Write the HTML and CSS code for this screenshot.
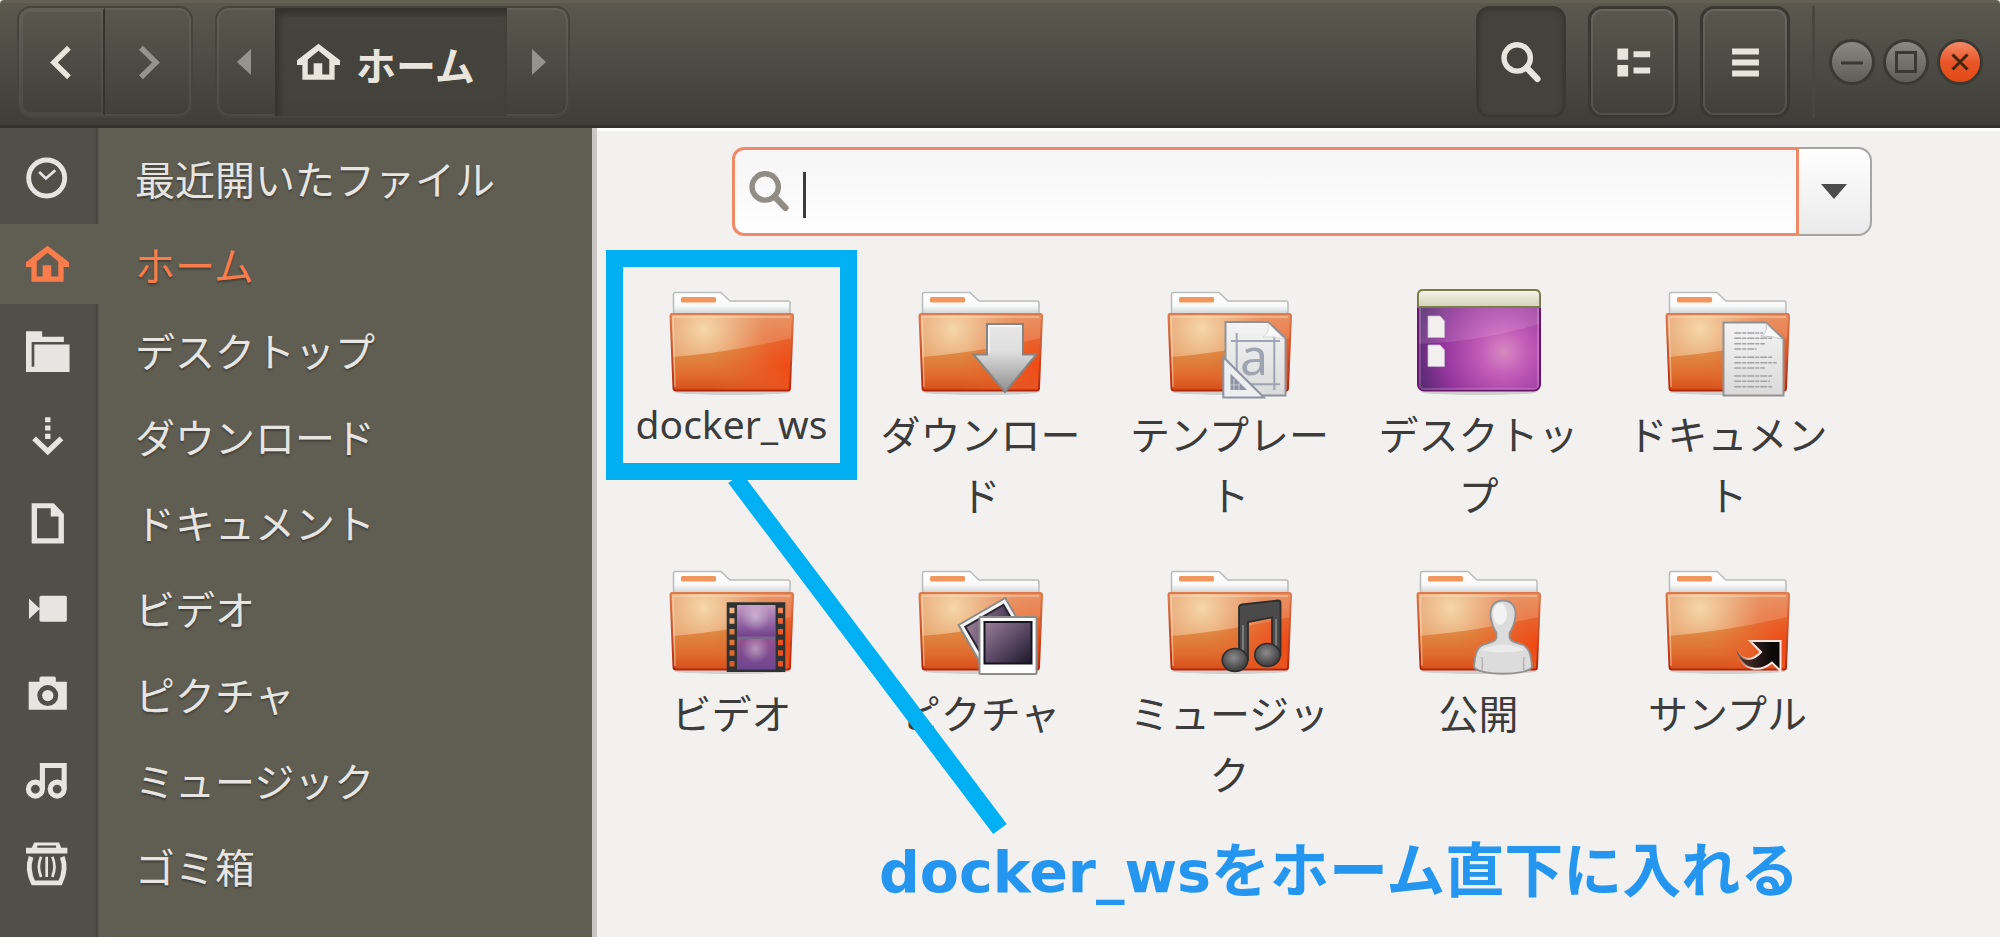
FILE: index.html
```html
<!DOCTYPE html>
<html lang="ja">
<head>
<meta charset="utf-8">
<meta name="viewport" content="width=device-width, initial-scale=1">
<title>ホーム</title>
<link rel="stylesheet" href="styles.css">
</head>
<body>
<svg class="defs" width="0" height="0" aria-hidden="true">
  <defs>
    <linearGradient id="front" x1="0" y1="0" x2="0" y2="1">
      <stop offset="0" stop-color="#e2925c"/><stop offset=".5" stop-color="#df8a45"/><stop offset=".8" stop-color="#df6c2d"/><stop offset="1" stop-color="#d64e1a"/>
    </linearGradient>
    <radialGradient id="ember" gradientUnits="userSpaceOnUse" cx="126" cy="80" r="76">
      <stop offset="0" stop-color="#f04a14"/><stop offset=".3" stop-color="#ec5420" stop-opacity=".8"/><stop offset="1" stop-color="#e8642a" stop-opacity="0"/>
    </radialGradient>
    <radialGradient id="shine" gradientUnits="userSpaceOnUse" cx="42" cy="43" r="60">
      <stop offset="0" stop-color="#f4d49c" stop-opacity=".95"/><stop offset="1" stop-color="#f0a878" stop-opacity="0"/>
    </radialGradient>
    <linearGradient id="edge" x1="0" y1="0" x2="0" y2="1">
      <stop offset="0" stop-color="#df7a4c"/><stop offset="1" stop-color="#b3260a"/>
    </linearGradient>
    <linearGradient id="paper" x1="0" y1="0" x2="0" y2="1">
      <stop offset="0" stop-color="#ffffff"/><stop offset=".6" stop-color="#fafafa"/><stop offset="1" stop-color="#cfd3d4"/>
    </linearGradient>
    <linearGradient id="sheet" x1="0" y1="0" x2="0" y2="1">
      <stop offset="0" stop-color="#f4f4f4"/><stop offset="1" stop-color="#dadada"/>
    </linearGradient>
    <linearGradient id="silver" x1="0" y1="0" x2="0" y2="1">
      <stop offset="0" stop-color="#e8e8e8"/><stop offset=".4" stop-color="#dedede"/><stop offset="1" stop-color="#8e8e8e"/>
    </linearGradient>
    <radialGradient id="violet" gradientUnits="userSpaceOnUse" cx="95" cy="66" r="88">
      <stop offset="0" stop-color="#d78ac0"/><stop offset=".28" stop-color="#c25ab8"/><stop offset=".7" stop-color="#93359c"/><stop offset="1" stop-color="#5b2a74"/>
    </radialGradient>
    <linearGradient id="panel" x1="0" y1="0" x2="0" y2="1">
      <stop offset="0" stop-color="#f6f5ea"/><stop offset="1" stop-color="#d3d2b8"/>
    </linearGradient>
    <linearGradient id="photo" x1="0" y1="0" x2="1" y2="1">
      <stop offset="0" stop-color="#9a8098"/><stop offset=".5" stop-color="#5c4a66"/><stop offset="1" stop-color="#1d1828"/>
    </linearGradient>
    <linearGradient id="film" x1="0" y1="0" x2="0" y2="1">
      <stop offset="0" stop-color="#c39ac4"/><stop offset=".48" stop-color="#73418c"/><stop offset=".52" stop-color="#93528f"/><stop offset="1" stop-color="#6c4590"/>
    </linearGradient>
    <radialGradient id="glow">
      <stop offset="0" stop-color="#fff" stop-opacity=".4"/><stop offset="1" stop-color="#fff" stop-opacity="0"/>
    </radialGradient>
    <radialGradient id="note" cx=".45" cy=".4" r=".6">
      <stop offset="0" stop-color="#8c8c8c"/><stop offset="1" stop-color="#3a3a3a"/>
    </radialGradient>
    <linearGradient id="emblem" x1="0" y1="0" x2="1" y2="0">
      <stop offset="0" stop-color="#5a3a34"/><stop offset=".8" stop-color="#0c0808"/>
    </linearGradient>
    <linearGradient id="rim" x1="0" y1="0" x2="1" y2="0">
      <stop offset="0" stop-color="#f6e7e0" stop-opacity="0"/><stop offset=".4" stop-color="#f6e7e0"/>
    </linearGradient>
    <symbol id="folder" viewBox="0 0 140 115">
      <ellipse cx="70" cy="106" rx="58" ry="3" fill="#000" opacity=".14"/>
      <path d="M11.500 28V8.500Q11.500 6.500 13.500 6.500H59L68 15H126Q128 15 128 17V28Z" fill="url(#paper)" stroke="#b9bcbc" stroke-width="1.500"/>
      <rect x="19" y="11" width="35" height="5.500" rx="1.500" fill="#f0965f"/>
      <path d="M10 28H129Q131 28 131 30L128 102Q128 104.500 126 104.500H14Q11.500 104.500 11.500 102L8.500 30Q8.500 28 10 28Z" fill="url(#front)"/>
      <path d="M10 28H129Q131 28 131 30L128 102Q128 104.500 126 104.500H14Q11.500 104.500 11.500 102L8.500 30Q8.500 28 10 28Z" fill="url(#ember)"/>
      <path d="M10 28H130L129.500 52Q70 66 10.500 71Z" fill="url(#shine)"/>
      <path d="M10 28H130L129.500 52Q70 66 10.500 71Z" fill="#fff" opacity=".16"/>
      <path d="M10 28H129Q131 28 131 30L128 102Q128 104.500 126 104.500H14Q11.500 104.500 11.500 102L8.500 30Q8.500 28 10 28Z" fill="none" stroke="url(#edge)" stroke-width="2"/>
      <path d="M13 101L11 31H128" fill="none" stroke="#ffe6c4" stroke-width="1.500" opacity=".5"/>
    </symbol>
    <symbol id="house" viewBox="0 0 16 16">
      <path fill-rule="evenodd" d="M8 1L16.100 7.200V8.900H14V14.400H2V8.900H-.100V7.200ZM8 3.600L4 6.900V12.500H6.200V8.300H9.400V12.500H12V6.900Z"/>
    </symbol>
    <symbol id="lens" viewBox="0 0 16 16">
      <circle cx="6.400" cy="6.300" r="4.900" fill="none" stroke="currentColor" stroke-width="2"/>
      <path d="M9.900 9.900L13.900 14.100" stroke="currentColor" stroke-width="2.400" stroke-linecap="round"/>
    </symbol>
  </defs>
</svg>

<div class="window">
  <header class="titlebar">
    <div class="group nav">
      <button class="seg" type="button" aria-label="戻る"><svg class="icon" viewBox="0 0 16 16"><path class="line" d="M10.400 2.500L4.800 8L10.400 13.500"/></svg></button>
      <button class="seg seg-dim" type="button" aria-label="進む"><svg class="icon" viewBox="0 0 16 16"><path class="line" d="M5.200 2.500L10.800 8L5.200 13.500"/></svg></button>
    </div>
    <div class="group path">
      <button class="step" type="button" aria-label="前の場所"><svg class="tri" viewBox="0 0 14 26"><path d="M12 0V26L-2 13Z"/></svg></button>
      <button class="place" type="button"><svg class="icon"><use href="#house"/></svg><span>ホーム</span></button>
      <button class="step step-next" type="button" aria-label="次の場所"><svg class="tri" viewBox="0 0 14 26"><path d="M2 0V26L16 13Z"/></svg></button>
    </div>
    <div class="tools">
      <button class="tool tool-on" type="button" aria-label="検索"><svg class="icon"><use href="#lens"/></svg></button>
      <button class="tool" type="button" aria-label="表示"><svg class="icon" viewBox="0 0 16 16"><path d="M2 2.800H6V7H2ZM2 8.900H6V13.200H2ZM8 3.800H14.200V6H8ZM8 9.900H14.200V12.100H8Z"/></svg></button>
      <button class="tool" type="button" aria-label="メニュー"><svg class="icon" viewBox="0 0 16 16"><path d="M3 2.800H13V5H3ZM3 6.900H13V9.100H3ZM3 11H13V13.200H3Z"/></svg></button>
    </div>
    <div class="controls">
      <button class="ctl" type="button" aria-label="最小化"><svg viewBox="0 0 40 40"><path d="M9 21H31"/></svg></button>
      <button class="ctl" type="button" aria-label="最大化"><svg viewBox="0 0 40 40"><path d="M10.500 10.500H29.500V29.500H10.500Z"/></svg></button>
      <button class="ctl ctl-close" type="button" aria-label="閉じる"><svg viewBox="0 0 40 40"><path d="M12.500 12.500L27.500 27.500M27.500 12.500L12.500 27.500"/></svg></button>
    </div>
  </header>

  <div class="body">
    <nav class="sidebar" aria-label="場所">
      <a class="row" href="#recent"><span class="cell"><svg class="icon" viewBox="0 0 16 16"><circle cx="7.700" cy="7.800" r="6.700" fill="none" stroke="currentColor" stroke-width="1.800"/><path d="M4.900 5.600L7.400 8L10.900 4.900" fill="none" stroke="currentColor" stroke-width="1"/></svg></span><span class="name">最近開いたファイル</span></a>
      <a class="row row-on" href="#home" aria-current="page"><span class="cell"><svg class="icon"><use href="#house"/></svg></span><span class="name">ホーム</span></a>
      <a class="row" href="#desktop"><span class="cell"><svg class="icon" viewBox="0 0 16 16"><path d="M0 .8H6V2.900H14.100V4.800H2.100V14H3.100V5.800H16.200V16H0Z"/></svg></span><span class="name">デスクトップ</span></a>
      <a class="row" href="#downloads"><span class="cell"><svg class="icon" viewBox="0 0 16 16"><path d="M7.100 .8H9.100V2.700H7.100ZM7.100 3.900H9.100V5.800H7.100ZM7.100 7H9.100V8.900H7.100Z"/><path class="line" d="M3 8.700L8.100 13.600L13.200 8.700"/></svg></span><span class="name">ダウンロード</span></a>
      <a class="row" href="#documents"><span class="cell"><svg class="icon" viewBox="0 0 16 16"><path fill-rule="evenodd" d="M2.100 .8H10.300L14.100 4.800V15.800H2.100ZM4.100 2.700V13.900H12.100V5.800H9.200V2.700Z"/></svg></span><span class="name">ドキュメント</span></a>
      <a class="row" href="#videos"><span class="cell"><svg class="icon" viewBox="0 0 16 16"><path d="M1.100 4.300L5 7.900V3.900Q5 3.300 5.600 3.300H14.600Q15.200 3.300 15.200 3.900V12.300Q15.200 12.900 14.600 12.900H5.600Q5 12.900 5 12.300V8.300L1.100 11.900Z"/></svg></span><span class="name">ビデオ</span></a>
      <a class="row" href="#pictures"><span class="cell"><svg class="icon" viewBox="0 0 16 16"><path fill-rule="evenodd" d="M5 3.300V2Q5 1.300 5.700 1.300H10.400Q11.100 1.300 11.100 2V3.300H15.200V13.700H1V3.300ZM8.100 4.500A3.900 3.900 0 1 0 8.100 12.300A3.900 3.900 0 1 0 8.100 4.500Z"/><circle cx="8.100" cy="8.400" r="2.100"/></svg></span><span class="name">ピクチャ</span></a>
      <a class="row" href="#music"><span class="cell"><svg class="icon" viewBox="0 0 16 16"><g fill="none" stroke="currentColor" stroke-width="1.900"><circle cx="3.500" cy="11.200" r="2.600"/><circle cx="11.600" cy="11.200" r="2.600"/><path d="M6.100 11.200V2.400H14.200V11.200"/></g></svg></span><span class="name">ミュージック</span></a>
      <a class="row" href="#trash"><span class="cell"><svg class="icon" viewBox="0 0 16 16"><path d="M0 1H2.200L3 -.900H12.300L13.100 1H15.400V3.200H0ZM4.200 .200V1H11.200V.200Z" fill-rule="evenodd"/><path d="M1.900 4.400Q.200 9 2.700 14.100H12.700Q15.200 9 13.500 4.400" fill="none" stroke="currentColor" stroke-width="1.800"/><path d="M5.600 4.400Q4 8 5.600 11.900M7.700 4.400V11.900M9.800 4.400Q11.400 8 9.800 11.900" fill="none" stroke="currentColor" stroke-width="1"/></svg></span><span class="name">ゴミ箱</span></a>
    </nav>

    <main class="content">
      <form class="search" role="search">
        <label class="field">
          <svg class="icon"><use href="#lens"/></svg>
          <span class="caret"></span>
          <input class="input" type="text" aria-label="検索">
        </label>
        <button class="drop" type="button" aria-label="検索オプション"><svg viewBox="0 0 26 15"><path d="M0 0H26L13 15Z"/></svg></button>
      </form>

      <ul class="files">
        <li class="file">
          <svg class="thumb" viewBox="0 0 140 115"><use href="#folder"/></svg>
          <span class="label label-latin">docker_ws</span>
          <span class="frame"></span>
        </li>
        <li class="file">
          <svg class="thumb" viewBox="0 0 140 115"><use href="#folder"/><path d="M76 38H112V68.500H125.500L94 106L62.500 68.500H76Z" fill="url(#silver)" stroke="#858585" stroke-width="2"/><path d="M78 67V40H110" fill="none" stroke="#fff" stroke-width="1.500" opacity=".8"/></svg>
          <span class="label">ダウンロード</span>
        </li>
        <li class="file">
          <svg class="thumb" viewBox="0 0 140 115"><use href="#folder"/><path d="M65.500 36H108L125.500 52V109.500H65.500Z" fill="url(#sheet)" stroke="#8f9299" stroke-width="2"/><path d="M71 55H120M71 98.300H120M76.700 47V104M114.300 51V104" stroke="#9fa4b2" stroke-width="2"/><path d="M108 37Q110 47 103 51Q115 50 124 53Z" fill="#f8f8f8" stroke="#ccc" stroke-width=".7"/><text class="glyph" x="94" y="89" text-anchor="middle">a</text><path d="M63.300 71L104 111.500H63.300Z" fill="#eceef2" stroke="#8d93a2" stroke-width="2"/><path d="M70.500 87.500L87 104H70.500Z" fill="#8d93a2"/><path d="M74 93V104M79 97V104M70.500 99H80" stroke="#c9ccd4" stroke-width="1"/></svg>
          <span class="label">テンプレート</span>
        </li>
        <li class="file">
          <svg class="thumb" viewBox="0 0 140 115"><ellipse cx="70" cy="106" rx="58" ry="3" fill="#000" opacity=".14"/><rect x="9" y="4.500" width="122" height="100" rx="6" fill="url(#violet)"/><path d="M10 22H130V38Q70 56 10 58Z" fill="#fff" opacity=".12"/><rect x="9" y="4.500" width="122" height="100" rx="6" fill="none" stroke="#6c1470" stroke-width="2"/><rect x="11" y="7" width="118" height="96" rx="4" fill="none" stroke="#fff" stroke-width="1.500" opacity=".25"/><path d="M9 21V9Q9 4 14 4H126Q131 4 131 9V21Z" fill="url(#panel)" stroke="#7b7b4a" stroke-width="1.800"/><path d="M19 30H31L35.500 35V51.500H19ZM19 59H31L35.500 64V80.500H19Z" fill="#f1f0ee" stroke="#c9b3cf" stroke-width=".8"/></svg>
          <span class="label">デスクトップ</span>
        </li>
        <li class="file">
          <svg class="thumb" viewBox="0 0 140 115"><use href="#folder"/><path d="M65.500 36.500H108L125.500 52.500V109.500H65.500Z" fill="url(#sheet)" stroke="#8f9290" stroke-width="2"/><path d="M76.300 47H105M76.300 52.300H114M76.300 57.700H107M76.300 63H98.700M76.300 71.300H114M76.300 76.700H118.700M76.300 82H107M76.300 90H114M76.300 95.300H112M76.300 100.700H114" stroke="#a2a2a2" stroke-width="1.600" stroke-dasharray="7 1 4 1"/><path d="M108 37.500Q110 47 103 50Q115 50 124 53Z" fill="#fafafa" stroke="#bbb" stroke-width=".8"/></svg>
          <span class="label">ドキュメント</span>
        </li>
        <li class="file">
          <svg class="thumb" viewBox="0 0 140 115"><use href="#folder"/><rect x="75" y="40" width="38.500" height="65" fill="url(#film)"/><circle cx="93.500" cy="52" r="15" fill="url(#glow)"/><circle cx="93.500" cy="84" r="14" fill="url(#glow)"/><path d="M75 72.700H113" stroke="#76678a" stroke-width="2.500"/><path fill="#2f3232" fill-rule="evenodd" d="M64.700 37.300H123.300V107H64.700ZM75 40V104.500H113.500V40ZM67.500 42.700V48.200H72.500V42.700ZM67.500 53.300V58.800H72.500V53.300ZM67.500 64V69.500H72.500V64ZM67.500 74.700V80.200H72.500V74.700ZM67.500 85.300V90.800H72.500V85.300ZM67.500 96V101.500H72.500V96ZM116 42.700V48.200H121V42.700ZM116 53.300V58.800H121V53.300ZM116 64V69.500H121V64ZM116 74.700V80.200H121V74.700ZM116 85.300V90.800H121V85.300ZM116 96V101.500H121V96Z"/></svg>
          <span class="label">ビデオ</span>
        </li>
        <li class="file">
          <svg class="thumb" viewBox="0 0 140 115"><use href="#folder"/><g transform="translate(47.500 60) rotate(-30)"><rect width="54" height="54" fill="#f4f4f4" stroke="#8b8b88" stroke-width="2"/><rect x="5" y="5" width="44" height="40" fill="url(#photo)" stroke="#2b2433" stroke-width="2"/></g><rect x="68.500" y="52" width="57" height="57" rx="1" fill="#fff" stroke="#8b8b88" stroke-width="2"/><rect x="73.500" y="57" width="47" height="41.500" fill="url(#photo)" stroke="#17131f" stroke-width="2"/></svg>
          <span class="label">ピクチャ</span>
        </li>
        <li class="file">
          <svg class="thumb" viewBox="0 0 140 115"><use href="#folder"/><path d="M79 93V43Q79 40 82 39.500L118 35.500Q120.500 35.500 120.500 38V90H112V52.300L88 57V95H79Z" fill="#4a4a4a" stroke="#2c2c2c" stroke-width="1.800"/><path d="M83 60V92M116 54V84" stroke="#8a8a8a" stroke-width="1.500"/><ellipse cx="75" cy="95" rx="12.800" ry="11.500" fill="url(#note)" stroke="#2c2c2c" stroke-width="1.500"/><ellipse cx="107.500" cy="90" rx="12.800" ry="11.500" fill="url(#note)" stroke="#2c2c2c" stroke-width="1.500"/></svg>
          <span class="label">ミュージック</span>
        </li>
        <li class="file">
          <svg class="thumb" viewBox="0 0 140 115"><use href="#folder"/><path d="M94 35.500C102 35.500 107 41 106.500 50C106 58 103 64 100.500 68V72.500C101 77 107 77.500 113 79.500C121 82.500 122 91 123 102C118 111 70 111 65 102C66 91 67 82.500 75 79.500C81 77.500 87 77 87.500 72.500V68C85 64 82 58 81.500 50C81 41 86 35.500 94 35.500Z" fill="#dcdcdc" stroke="#929292" stroke-width="1.800"/><ellipse cx="91" cy="49" rx="7" ry="11" fill="#f2f2f2"/><path d="M73 106Q74 98 73 92M115 106Q114 98 115 92" fill="none" stroke="#b4b4b4" stroke-width="1.500"/><path d="M72 85Q94 74 116 85Q94 90 72 85Z" fill="#ebebeb"/></svg>
          <span class="label">公開</span>
        </li>
        <li class="file">
          <svg class="thumb" viewBox="0 0 140 115"><use href="#folder"/><path d="M92 76H122.500V106L114 97.500C103 107 84 108 78 84C83 95 93 98 103 87Z" fill="url(#emblem)" stroke="url(#rim)" stroke-width="2"/></svg>
          <span class="label">サンプル</span>
        </li>
      </ul>

      <svg class="pointer" viewBox="0 0 300 360" aria-hidden="true"><path d="M11 -2L276 349"/></svg>
      <p class="caption"><span class="caption-latin">docker_ws</span>をホーム直下に入れる</p>
    </main>
  </div>
</div>
</body>
</html>
```
FILE: styles.css
```css
* {
  box-sizing: border-box;
}

body {
  margin: 0;
  min-height: 100vh;
  padding-bottom: 11px;
  display: flex;
  background: #fff;
  font-family: "Noto Sans CJK JP", sans-serif;
  font-size: 40px;
  line-height: 60px;
}

button {
  margin: 0;
  padding: 0;
  border: 0;
  background: none;
  color: inherit;
  font: inherit;
  display: flex;
  align-items: center;
  justify-content: center;
}

.defs {
  position: absolute;
}

.icon {
  width: 43px;
  height: 43px;
  flex: none;
  fill: currentColor;
  overflow: visible;
}

.line {
  fill: none;
  stroke: currentColor;
  stroke-width: 2;
}

.window {
  flex: 1;
  min-width: 0;
  display: flex;
  flex-direction: column;
}

/* Title bar */
.titlebar {
  display: flex;
  padding: 3px 17px 7px;
  border-top: 3px solid #646154;
  border-bottom: 3px solid #33322e;
  border-radius: 4px 4px 0 0;
  background: linear-gradient(#5b584e, #3e3d38);
  color: #e9e4dc;
}

.group {
  height: 112px;
  display: flex;
  border: 2px solid #45443d;
  border-radius: 14px;
  box-shadow: inset 0 0 0 2px rgba(255, 255, 255, 0.06);
  overflow: hidden;
}

.path {
  margin-left: 22px;
}

.seg {
  width: 86px;
  border: 2px solid transparent;
}

.seg:first-child {
  border-right-color: #34332e;
  border-radius: 12px 0 0 12px;
  box-shadow: inset 0 0 0 2px rgba(255, 255, 255, 0.05);
}

.seg-dim,
.step {
  color: #96938c;
}

.step {
  width: 58px;
}

.step-next {
  width: 61px;
}

.tri {
  width: 14px;
  height: 26px;
  fill: currentColor;
  overflow: visible;
}

.place {
  gap: 16px;
  padding: 0 32px 0 22px;
  background: linear-gradient(#45443d, #42413b);
  box-shadow: inset 4px 6px 6px #33322d;
  font-weight: 700;
}

.place span {
  padding-top: 4px;
}

.tools {
  display: flex;
  gap: 22px;
  margin-left: auto;
}

.tool {
  width: 90px;
  height: 112px;
  border: 3px solid #393833;
  border-radius: 14px;
  box-shadow: inset 0 0 0 2px rgba(255, 255, 255, 0.09);
}

.tool-on {
  background: #43423c;
  box-shadow: inset 0 2px 4px #3a3934;
}

.controls {
  display: flex;
  align-items: center;
  gap: 8px;
  margin-left: 22px;
  padding-left: 14px;
  border-left: 3px solid #47463f;
}

.ctl {
  width: 46px;
  height: 46px;
  border: 3px solid #3a3934;
  border-radius: 50%;
  background: linear-gradient(#8b8981, #5e5d56);
}

.ctl svg {
  width: 40px;
  height: 40px;
  flex: none;
  fill: none;
  stroke: #3a3934;
  stroke-width: 3;
}

.ctl-close {
  background: linear-gradient(#f58a66, #e8562a 50%, #e24a14);
}

.ctl-close svg {
  stroke: #40260f;
}

/* Places */
.body {
  flex: 1;
  display: flex;
}

.sidebar {
  width: 597px;
  flex: none;
  display: flex;
  flex-direction: column;
  gap: 6px;
  padding: 10px 0 20px;
  border-right: 5px solid #c9c6c5;
  background: linear-gradient(90deg, #504f48 95px, #45443e 97px, #605d52 99px);
}

.row {
  height: 80px;
  display: flex;
  align-items: center;
  color: #e6e5e2;
  text-decoration: none;
}

.row-on {
  background: #605d52;
  color: #fa7c4a;
}

.cell {
  width: 98px;
  flex: none;
  display: flex;
  padding-left: 26px;
}

.name {
  padding-left: 37px;
  text-shadow: 0 2px 2px rgba(40, 38, 32, 0.5);
}

/* Files */
.content {
  position: relative;
  flex: 1;
  min-width: 0;
  padding: 16px 4px 0 10px;
  border-top: 3px solid #fff;
  background: #f2f1f0;
}

.search {
  width: 1140px;
  max-width: 100%;
  height: 89px;
  margin: 0 auto;
  display: flex;
}

.field {
  flex: 1;
  display: flex;
  align-items: center;
  padding: 0 13px;
  border: 3px solid #ee8a66;
  border-radius: 12px 0 0 12px;
  background: linear-gradient(#f5f5f5, #fff);
  color: #918c84;
}

.caret {
  width: 3px;
  height: 46px;
  margin: 6px 0 0 12px;
  background: #3c3c3c;
}

.input {
  flex: 1;
  min-width: 0;
  border: 0;
  outline: 0;
  background: none;
  font: inherit;
}

.drop {
  width: 73px;
  border: 2px solid #a5a5a5;
  border-left: 0;
  border-radius: 0 14px 14px 0;
  background: linear-gradient(#fff, #ebeaea);
}

.drop svg {
  width: 26px;
  height: 15px;
  fill: #4c4c4c;
}

.files {
  margin: 50px 0 0;
  padding: 0;
  list-style: none;
  display: grid;
  grid-template-columns: repeat(auto-fill, 249px);
  row-gap: 40px;
}

.file {
  position: relative;
  display: flex;
  flex-direction: column;
  align-items: center;
}

.thumb {
  width: 140px;
  height: 115px;
}

.glyph {
  font: 50px "Noto Sans", sans-serif;
  fill: #9fa4b2;
}

.label {
  width: 217px;
  padding-top: 2px;
  color: #3c3c3c;
  text-align: center;
  line-height: 61px;
}

.label-latin {
  padding-top: 0;
  font-family: "Noto Sans", sans-serif;
  font-size: 39px;
  line-height: 46px;
}

/* Callout */
.frame {
  position: absolute;
  top: -36px;
  left: -1px;
  width: 251px;
  height: 230px;
  border: 17px solid #00b0f3;
}

.pointer {
  position: absolute;
  top: 349px;
  left: 127px;
  width: 300px;
  height: 360px;
  fill: none;
  stroke: #00b0f3;
  stroke-width: 17;
}

.caption {
  position: absolute;
  top: 696px;
  left: 282px;
  margin: 0;
  color: #2596f0;
  font-size: 59px;
  font-weight: 700;
  line-height: 80px;
  white-space: nowrap;
}

.caption-latin {
  font-family: "DejaVu Sans", sans-serif;
  font-size: 57px;
}
```
